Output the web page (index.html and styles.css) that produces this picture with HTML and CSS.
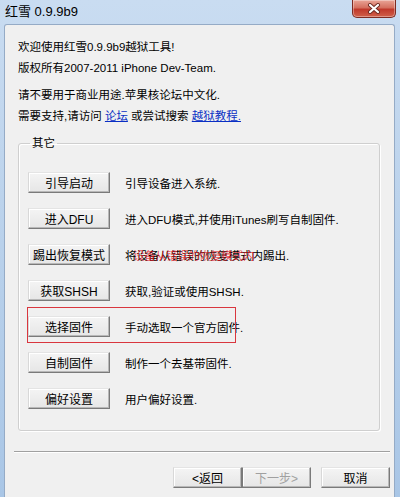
FILE: index.html
```html
<!DOCTYPE html>
<html lang="zh-CN">
<head>
    <meta charset="UTF-8">
    <meta name="viewport" content="width=device-width, initial-scale=1.0">
    <title>红雪 0.9.9b9</title>
    <link rel="stylesheet" href="styles.css">
</head>
<body>
    <div class="window">
        <div class="titlebar">
            <span class="title">红雪 0.9.9b9</span>
            <button class="close-button" aria-label="关闭">
                <svg width="14" height="11" viewBox="0 0 14 11">
                    <path d="M3 2 L11 9 M11 2 L3 9" stroke="#6b2a22" stroke-width="4" stroke-linecap="round"/>
                    <path d="M3 2 L11 9 M11 2 L3 9" stroke="#fff" stroke-width="2.2" stroke-linecap="round"/>
                </svg>
            </button>
        </div>

        <div class="client">
            <div class="intro">
                <p>欢迎使用红雪0.9.9b9越狱工具!</p>
                <p>版权所有2007-2011 iPhone Dev-Team.</p>
            </div>
            <div class="intro intro-support">
                <p>请不要用于商业用途.苹果核论坛中文化.</p>
                <p>需要支持,请访问 <a href="#" class="link">论坛</a> 或尝试搜索 <a href="#" class="link">越狱教程.</a></p>
            </div>

            <fieldset class="group">
                <legend>其它</legend>
                <div class="row">
                    <button class="win-button">引导启动</button>
                    <span class="desc">引导设备进入系统.</span>
                </div>
                <div class="row">
                    <button class="win-button">进入DFU</button>
                    <span class="desc">进入DFU模式,并使用iTunes刷写自制固件.</span>
                </div>
                <div class="row">
                    <button class="win-button">踢出恢复模式</button>
                    <span class="desc">将设备从错误的恢复模式内踢出.<span class="watermark">设备从错误的恢复模式内</span></span>
                </div>
                <div class="row">
                    <button class="win-button">获取SHSH</button>
                    <span class="desc">获取,验证或使用SHSH.</span>
                </div>
                <div class="row">
                    <button class="win-button">选择固件</button>
                    <span class="desc">手动选取一个官方固件.</span>
                    <div class="highlight"></div>
                </div>
                <div class="row">
                    <button class="win-button">自制固件</button>
                    <span class="desc">制作一个去基带固件.</span>
                </div>
                <div class="row">
                    <button class="win-button">偏好设置</button>
                    <span class="desc">用户偏好设置.</span>
                </div>
            </fieldset>

            <div class="bottom">
                <div class="separator"></div>
                <div class="footer">
                    <button class="win-button nav-button">&lt;返回</button>
                    <button class="win-button nav-button" disabled>下一步&gt;</button>
                    <button class="win-button nav-button cancel">取消</button>
                </div>
            </div>
        </div>
    </div>
</body>
</html>
```

FILE: styles.css
```css
body {
    margin: 0;
    font-family: 'Liberation Sans', 'Noto Sans CJK SC', sans-serif;
    font-size: 11.5px;
    color: #000;
}

.window {
    width: 400px;
    height: 497px;
    display: flex;
    flex-direction: column;
    background: linear-gradient(to bottom, #c9dcf1, #bcd3ec 40%, #a9c6e6);
    overflow: hidden;
}

.titlebar {
    height: 24px;
    flex: none;
    display: flex;
    align-items: flex-start;
    justify-content: space-between;
}

.title {
    font-size: 13px;
    line-height: 24px;
    padding-left: 5px;
}

.close-button {
    width: 44px;
    height: 18px;
    margin-right: 4px;
    padding: 0;
    border: 1px solid #7d2b22;
    border-top: none;
    border-radius: 0 0 5px 5px;
    background: linear-gradient(to bottom, #e9a597, #d4705f 45%, #c0392b 55%, #d0604a);
    box-shadow: inset 0 0 0 1px rgba(255, 255, 255, 0.35);
    display: flex;
    align-items: center;
    justify-content: center;
}

.client {
    flex: 1;
    margin: 0 5px 0 4px;
    padding: 12px 14px 0 13px;
    background: #f0f0f0;
    border: 1px solid #95abc6;
    border-bottom: none;
    border-radius: 3px 3px 0 0;
}

.intro p {
    margin: 0;
    line-height: 21px;
    white-space: nowrap;
}

.intro-support {
    margin-top: 6px;
}

.link {
    color: #0a2fc4;
    text-decoration: underline;
}

.group {
    margin: 9px 0 0;
    padding: 22px 9px 21px;
    border: 1px solid #cfcfcf;
    border-radius: 3px;
    box-shadow: inset 1px 1px 0 #fff, 1px 1px 0 #fff;
}

.group legend {
    padding: 0 2px;
    margin-left: 2px;
    line-height: 14px;
}

.row {
    position: relative;
    display: flex;
    align-items: center;
    gap: 15px;
    height: 21px;
    margin-bottom: 15px;
}

.row:last-child {
    margin-bottom: 0;
}

.win-button {
    width: 82px;
    height: 21px;
    padding: 0;
    font-family: inherit;
    font-size: 12px;
    color: #000;
    background: linear-gradient(to bottom, #f4f4f4, #e6e6e6);
    border: 1px solid;
    border-color: #e4e4e4 #7a7a7a #7a7a7a #d8d8d8;
    box-shadow: inset -1px -1px 0 #b8b8b8, inset 1px 1px 0 #fff;
    flex: none;
}

.desc {
    position: relative;
    white-space: nowrap;
}

.watermark {
    position: absolute;
    left: 8px;
    top: 0;
    color: rgba(230, 20, 30, 0.75);
    letter-spacing: -0.5px;
}

.highlight {
    position: absolute;
    left: -1px;
    top: -9px;
    width: 207px;
    height: 34px;
    border: 1px solid #d9363e;
}

.bottom {
    margin: 20px -10px 0 -4px;
}

.separator {
    border-top: 1px solid #a0a0a0;
    border-bottom: 1px solid #fff;
}

.footer {
    display: flex;
    justify-content: flex-end;
    margin-top: 14px;
}

.nav-button {
    width: 69px;
}

.nav-button:disabled {
    color: #a0a0a0;
    border-left-color: #7a7a7a;
}

.cancel {
    margin-left: 10px;
}
```
